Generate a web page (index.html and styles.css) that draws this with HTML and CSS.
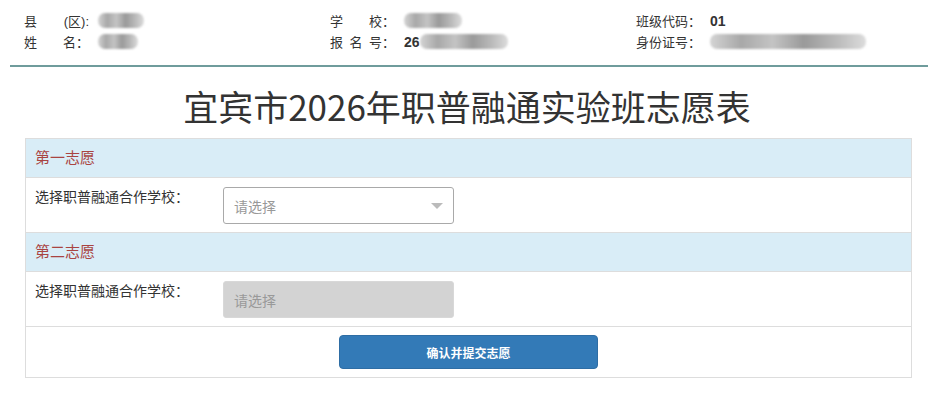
FILE: index.html
```html
<!DOCTYPE html>
<html lang="zh-CN">
<head>
  <meta charset="UTF-8" />
  <meta name="viewport" content="width=device-width, initial-scale=1.0" />
  <title>宜宾市2026年职普融通实验班志愿表</title>
  <link rel="stylesheet" href="styles.css">
</head>
<body>
  <div class="info">
    <div class="info-col">
      <div class="info-row"><span class="key"><span>县</span><span>(区):</span></span><span class="mask w46"></span></div>
      <div class="info-row"><span class="key"><span>姓</span><span>名：</span></span><span class="mask w40"></span></div>
    </div>
    <div class="info-col">
      <div class="info-row"><span class="key"><span>学</span><span>校：</span></span><span class="mask w58"></span></div>
      <div class="info-row"><span class="key"><span>报</span><span>名</span><span>号：</span></span><b>26</b><span class="mask w88"></span></div>
    </div>
    <div class="info-col">
      <div class="info-row"><span class="key"><span>班级代码：</span></span><b>01</b></div>
      <div class="info-row"><span class="key"><span>身份证号：</span></span><span class="mask w156"></span></div>
    </div>
  </div>

  <h1>宜宾市2026年职普融通实验班志愿表</h1>

  <div class="form-table">
    <div class="section">第一志愿</div>
    <div class="field">
      <span class="field-label">选择职普融通合作学校：</span>
      <div class="select">
        <span>请选择</span>
        <span class="caret"></span>
      </div>
    </div>
    <div class="section">第二志愿</div>
    <div class="field">
      <span class="field-label">选择职普融通合作学校：</span>
      <div class="select disabled">
        <span>请选择</span>
      </div>
    </div>
    <div class="actions">
      <button type="button">确认并提交志愿</button>
    </div>
  </div>
</body>
</html>
```

FILE: styles.css
```css
body {
  margin: 0;
  font-family: "Liberation Sans", "Noto Sans CJK SC", sans-serif;
  color: #333;
  background: #fff;
}
.info {
  display: grid;
  grid-template-columns: repeat(3, 306px);
  margin: 0 6px 0 10px;
  padding: 10px 0 13px;
  border-bottom: 2px solid #6f9c9c;
  font-size: 13px;
}
.info-col {
  padding-left: 14px;
}
.info-row {
  display: flex;
  align-items: center;
  height: 21px;
}
.key {
  display: flex;
  justify-content: space-between;
  width: 65px;
  margin-right: 9px;
  white-space: nowrap;
}
.info-row b {
  font-size: 14px;
}
.mask {
  display: inline-block;
  height: 15px;
  border-radius: 7px;
  background: linear-gradient(90deg, #d4d4d4 0%, #a8a8a8 20%, #c4c4c4 40%, #9a9a9a 60%, #b8b8b8 80%, #dcdcdc 100%);
  filter: blur(1.2px);
}
.w40 { width: 40px; }
.w46 { width: 46px; }
.w58 { width: 58px; }
.w88 { width: 88px; }
.w156 { width: 156px; }

h1 {
  margin: 14px 0 7px;
  text-align: center;
  font-family: "Noto Sans CJK SC", sans-serif;
  font-size: 35px;
  font-weight: normal;
  line-height: 50px;
  color: #333;
}
.form-table {
  margin: 0 22px 0 25px;
  border: 1px solid #ddd;
}
.section {
  height: 38px;
  line-height: 38px;
  padding-left: 9px;
  background: #d9edf7;
  border-bottom: 1px solid #ddd;
  color: #a94442;
  font-size: 15px;
}
.field {
  display: flex;
  align-items: flex-start;
  box-sizing: border-box;
  height: 55px;
  padding-top: 9px;
  border-bottom: 1px solid #ddd;
}
.field-label {
  width: 188px;
  padding-left: 9px;
  line-height: 20px;
  font-size: 14px;
}
.select {
  display: flex;
  align-items: center;
  justify-content: space-between;
  width: 231px;
  height: 37px;
  box-sizing: border-box;
  padding: 0 10px 0 10px;
  border: 1px solid #a9a9a9;
  border-radius: 3px;
  color: #999;
  font-size: 14px;
}
.select.disabled {
  background: #d3d3d3;
  border-color: #d8d8d8;
}
.caret {
  width: 0;
  height: 0;
  border-left: 6px solid transparent;
  border-right: 6px solid transparent;
  border-top: 6px solid #bbb;
}
.actions {
  display: flex;
  justify-content: center;
  padding: 8px 0;
}
button {
  width: 259px;
  height: 34px;
  border: 1px solid #2e6da4;
  border-radius: 4px;
  background: #337ab7;
  color: #fff;
  font-family: "Noto Sans CJK SC", sans-serif;
  font-size: 12px;
  font-weight: bold;
  cursor: pointer;
}
```
